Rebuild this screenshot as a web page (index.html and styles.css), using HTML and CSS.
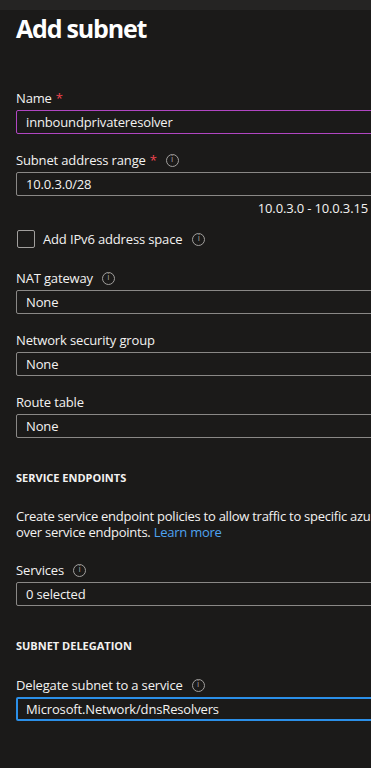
FILE: index.html
```html
<!DOCTYPE html>
<html lang="en">
<head>
    <meta charset="UTF-8">
    <meta name="viewport" content="width=device-width, initial-scale=1.0">
    <title>Add subnet</title>
    <link rel="stylesheet" href="styles.css">
</head>
<body>
    <div class="topbar"></div>

    <div class="panel">
        <h1>Add subnet</h1>

        <div class="field field-first">
            <div class="label">Name <span class="req">*</span></div>
            <div class="input input-focus">innboundprivateresolver</div>
        </div>

        <div class="field">
            <div class="label">Subnet address range <span class="req">*</span> <span class="info">i</span></div>
            <div class="input">10.0.3.0/28</div>
            <div class="hint">10.0.3.0 - 10.0.3.15</div>
        </div>

        <div class="check-row">
            <span class="checkbox"></span>
            <span>Add IPv6 address space</span>
            <span class="info">i</span>
        </div>

        <div class="field field-nat">
            <div class="label">NAT gateway <span class="info">i</span></div>
            <div class="input">None</div>
        </div>

        <div class="field">
            <div class="label">Network security group</div>
            <div class="input">None</div>
        </div>

        <div class="field">
            <div class="label">Route table</div>
            <div class="input">None</div>
        </div>

        <h3 class="section">SERVICE ENDPOINTS</h3>
        <p class="desc">
            <span class="line">Create service endpoint policies to allow traffic to specific azure resources</span>
            <span class="line">over service endpoints. <a href="#">Learn more</a></span>
        </p>

        <div class="field field-services">
            <div class="label">Services <span class="info">i</span></div>
            <div class="input">0 selected</div>
        </div>

        <h3 class="section">SUBNET DELEGATION</h3>

        <div class="field field-delegate">
            <div class="label">Delegate subnet to a service <span class="info">i</span></div>
            <div class="input input-selected">Microsoft.Network/dnsResolvers</div>
        </div>
    </div>
</body>
</html>
```

FILE: styles.css
```css
body {
    margin: 0;
    background-color: #1b1a19;
    color: #f3f2f1;
    font-family: "Open Sans", Arial, sans-serif;
    font-size: 13px;
    letter-spacing: -0.15px;
    overflow: hidden;
    white-space: nowrap;
}
.topbar {
    height: 10px;
    background-color: #252423;
}
.panel {
    padding-left: 16px;
}
h1 {
    margin: 3px 0 0;
    font-size: 25px;
    font-weight: 700;
    letter-spacing: -1.2px;
    line-height: 30px;
    color: #fff;
}
.field {
    margin-top: 16px;
}
.field-first {
    margin-top: 45px;
}
.field-nat {
    margin-top: 20px;
}
.label {
    display: flex;
    align-items: center;
    height: 20px;
    margin-bottom: 2px;
}
.req {
    color: #f1444f;
    margin-left: 4px;
    margin-right: 9px;
}
.label > .info {
    margin-left: 9px;
}
.label > .req + .info {
    margin-left: 0;
}
.info {
    display: inline-flex;
    align-items: center;
    justify-content: center;
    width: 11px;
    height: 11px;
    border: 1px solid #a19f9d;
    border-radius: 50%;
    font-size: 8px;
    letter-spacing: 0;
    line-height: 1;
    color: #a19f9d;
    font-family: "DejaVu Sans", sans-serif;
}
.input {
    height: 22px;
    line-height: 22px;
    width: 400px;
    padding-left: 9px;
    border: 1px solid #8a8886;
    border-radius: 2px;
    color: #f3f2f1;
}
.input-focus {
    border-color: #b146c2;
}
.input-selected {
    height: 20px;
    line-height: 20px;
    padding-left: 8px;
    border: 2px solid #2b8fe8;
}
.hint {
    width: 352px;
    text-align: right;
    margin-top: 4px;
    line-height: 16px;
}
.check-row {
    display: flex;
    align-items: center;
    gap: 8px;
    margin-top: 14px;
    height: 18px;
}
.checkbox {
    width: 16px;
    height: 16px;
    margin-left: 1px;
    border: 1px solid #a19f9d;
    border-radius: 2px;
}
.check-row .info {
    margin-left: 2px;
}
.section {
    margin: 32px 0 0;
    font-size: 11px;
    font-weight: 700;
    letter-spacing: 0;
    line-height: 16px;
}
.desc {
    margin: 22px 0 0;
    line-height: 16px;
    letter-spacing: -0.25px;
}
.desc .line {
    display: block;
}
.desc a {
    color: #4fa3f0;
    text-decoration: none;
}
.field-services {
    margin-top: 20px;
}
.field-delegate {
    margin-top: 21px;
}
```
